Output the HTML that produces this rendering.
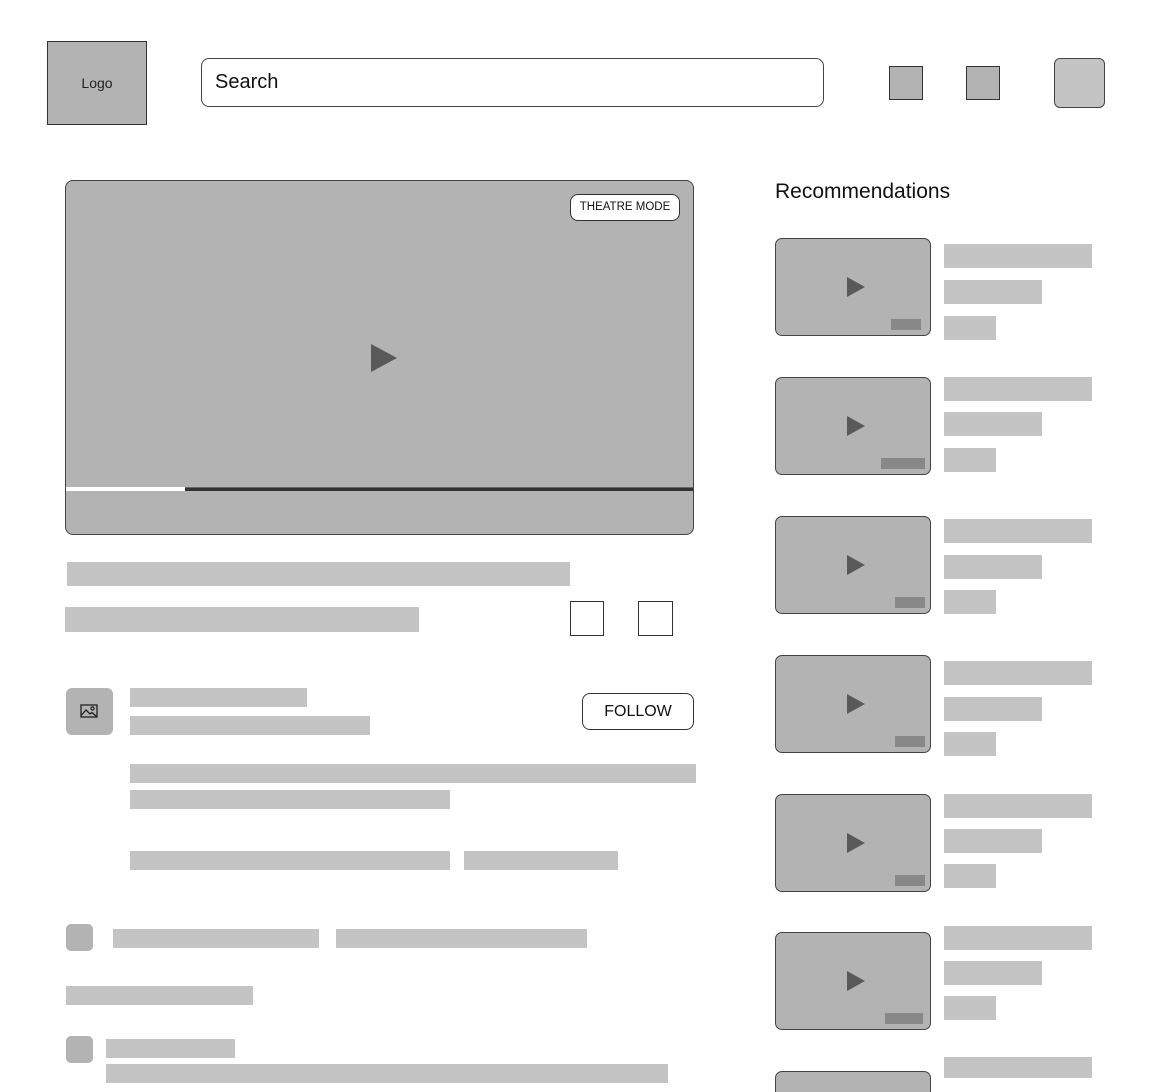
<!DOCTYPE html>
<html><head><meta charset="utf-8"><style>
*{margin:0;padding:0;box-sizing:border-box}
html{width:1152px;height:1092px;overflow:hidden}
body{width:1152px;height:1092px;overflow:hidden;background:#fff;font-family:"Liberation Sans",sans-serif;position:relative}
.a{position:absolute}
.bar{position:absolute;background:#c4c4c4}
.sq{position:absolute;background:#b3b3b3;border:1px solid #333}
.th{position:absolute;left:775px;width:156px;height:98px;background:#b3b3b3;border:1px solid #444;border-radius:7px}
.th .p{position:absolute;left:71px;top:38px;width:0;height:0;border-top:10px solid transparent;border-bottom:10px solid transparent;border-left:18px solid #595959}
.th .b{position:absolute;bottom:5px;height:11px;background:#888}
</style></head><body>
<div class="sq" style="left:47px;top:41px;width:100px;height:84px;display:flex;align-items:center;justify-content:center;font-size:14px;color:#222">Logo</div>
<div class="a" style="left:201px;top:58px;width:623px;height:49px;border:1px solid #444;border-radius:8px;font-size:20px;color:#111;padding:12px 0 0 13px">Search</div>
<div class="sq" style="left:889px;top:66px;width:34px;height:34px"></div>
<div class="sq" style="left:966px;top:66px;width:34px;height:34px"></div>
<div class="a" style="left:1054px;top:58px;width:51px;height:50px;background:#c4c4c4;border:1px solid #444;border-radius:6px"></div>

<div class="a" style="left:65px;top:180px;width:629px;height:355px;background:#b3b3b3;border:1px solid #444;border-radius:8px;overflow:hidden">
 <div class="a" style="left:504px;top:13px;width:110px;height:27px;background:#fff;border:1px solid #333;border-radius:8px;font-size:11.5px;color:#111;text-align:center;line-height:25px">THEATRE MODE</div>
 <div class="a" style="left:305px;top:163px;width:0;height:0;border-top:14px solid transparent;border-bottom:14px solid transparent;border-left:26px solid #595959"></div>
 <div class="a" style="left:0;top:306px;width:119px;height:4px;background:#fff"></div>
 <div class="a" style="left:119px;top:306px;width:510px;height:4px;background:#333;border-top:1px solid #666"></div>
</div>

<div class="bar" style="left:67px;top:562px;width:503px;height:24px"></div>
<div class="bar" style="left:65px;top:607px;width:354px;height:25px"></div>
<div class="a" style="left:570px;top:601px;width:34px;height:35px;border:1px solid #333"></div>
<div class="a" style="left:638px;top:601px;width:35px;height:35px;border:1px solid #333"></div>

<div class="a" style="left:66px;top:688px;width:47px;height:47px;background:#b3b3b3;border-radius:6px">
 <svg class="a" style="left:14px;top:16px" width="18" height="15" viewBox="0 0 18 15"><rect x="1" y="1" width="16" height="12" fill="none" stroke="#222" stroke-width="1.3"/><path d="M1.5 11 L6 6 L10 10 L12 8.5 L16.5 12.5" fill="none" stroke="#222" stroke-width="1.3"/><circle cx="12.5" cy="4.5" r="1.6" fill="none" stroke="#222" stroke-width="1.2"/></svg>
</div>
<div class="bar" style="left:130px;top:688px;width:177px;height:19px"></div>
<div class="bar" style="left:130px;top:716px;width:240px;height:19px"></div>
<div class="a" style="left:582px;top:693px;width:112px;height:37px;border:1px solid #333;border-radius:8px;font-size:16px;color:#111;text-align:center;line-height:35px">FOLLOW</div>

<div class="bar" style="left:130px;top:764px;width:566px;height:19px"></div>
<div class="bar" style="left:130px;top:790px;width:320px;height:19px"></div>
<div class="bar" style="left:130px;top:851px;width:320px;height:19px"></div>
<div class="bar" style="left:464px;top:851px;width:154px;height:19px"></div>

<div class="a" style="left:66px;top:924px;width:27px;height:27px;background:#b3b3b3;border-radius:5px"></div>
<div class="bar" style="left:113px;top:929px;width:206px;height:19px"></div>
<div class="bar" style="left:336px;top:929px;width:251px;height:19px"></div>
<div class="bar" style="left:66px;top:986px;width:187px;height:19px"></div>
<div class="a" style="left:66px;top:1036px;width:27px;height:27px;background:#b3b3b3;border-radius:5px"></div>
<div class="bar" style="left:106px;top:1039px;width:129px;height:19px"></div>
<div class="bar" style="left:106px;top:1064px;width:562px;height:19px"></div>

<div class="a" style="left:775px;top:180px;font-size:21px;color:#111">Recommendations</div>

<div class="th" style="top:238px"><div class="p"></div><div class="b" style="left:115px;width:30px"></div></div>
<div class="th" style="top:377px"><div class="p"></div><div class="b" style="left:105px;width:44px"></div></div>
<div class="th" style="top:516px"><div class="p"></div><div class="b" style="left:119px;width:30px"></div></div>
<div class="th" style="top:655px"><div class="p"></div><div class="b" style="left:119px;width:30px"></div></div>
<div class="th" style="top:794px"><div class="p"></div><div class="b" style="left:119px;width:30px"></div></div>
<div class="th" style="top:932px"><div class="p"></div><div class="b" style="left:109px;width:38px"></div></div>
<div class="th" style="top:1071px;height:22px;border-bottom:none;border-radius:7px 7px 0 0"></div>

<div class="bar" style="left:944px;top:244px;width:148px;height:24px"></div>
<div class="bar" style="left:944px;top:280px;width:98px;height:24px"></div>
<div class="bar" style="left:944px;top:316px;width:52px;height:24px"></div>
<div class="bar" style="left:944px;top:377px;width:148px;height:24px"></div>
<div class="bar" style="left:944px;top:412px;width:98px;height:24px"></div>
<div class="bar" style="left:944px;top:448px;width:52px;height:24px"></div>
<div class="bar" style="left:944px;top:519px;width:148px;height:24px"></div>
<div class="bar" style="left:944px;top:555px;width:98px;height:24px"></div>
<div class="bar" style="left:944px;top:590px;width:52px;height:24px"></div>
<div class="bar" style="left:944px;top:661px;width:148px;height:24px"></div>
<div class="bar" style="left:944px;top:697px;width:98px;height:24px"></div>
<div class="bar" style="left:944px;top:732px;width:52px;height:24px"></div>
<div class="bar" style="left:944px;top:794px;width:148px;height:24px"></div>
<div class="bar" style="left:944px;top:829px;width:98px;height:24px"></div>
<div class="bar" style="left:944px;top:864px;width:52px;height:24px"></div>
<div class="bar" style="left:944px;top:926px;width:148px;height:24px"></div>
<div class="bar" style="left:944px;top:961px;width:98px;height:24px"></div>
<div class="bar" style="left:944px;top:996px;width:52px;height:24px"></div>
<div class="bar" style="left:944px;top:1057px;width:148px;height:21px"></div>
</body></html>
